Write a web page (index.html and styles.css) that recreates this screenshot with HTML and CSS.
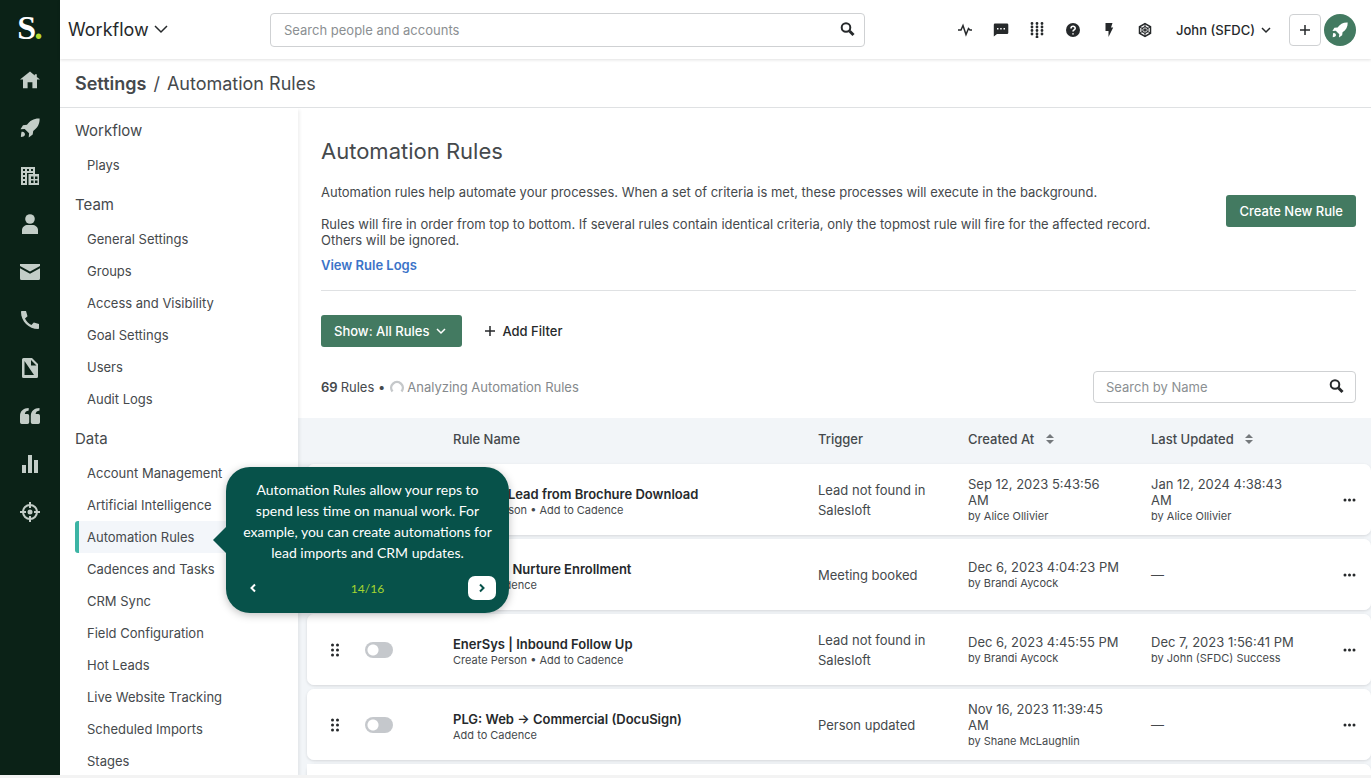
FILE: index.html
```
<!DOCTYPE html>
<html lang="en">
<head>
    <meta charset="UTF-8">
    <meta name="viewport" content="width=device-width, initial-scale=1.0">
    <title>Automation Rules</title>
    <link rel="stylesheet" href="styles.css">
</head>
<body>
    <div class="app">
        <!-- Icon rail -->
        <nav class="rail" aria-label="Main">
            <a href="#" class="logo">S<span>.</span></a>
            <a href="#" aria-label="Home"><svg viewBox="0 0 20 20"><path d="M10 1.5 0 9.6h3v8.6h4.6v-6h4.8v6H17V9.6h3L16.8 7V4.2h-2V5.4z"/></svg></a>
            <a href="#" aria-label="Cadences"><svg viewBox="0 0 20 20"><path d="M19.6.5C14.2.2 9.8 2.6 7 6.8L3 7.2.5 11.2l4.2-.3 4.4 4.4-.4 4.2 4-3 .5-3.6c4.200-2.700 6.700-7 6.400-12.400z"/><path d="M1.6 13.800c1.800-.6 3.900 1.200 3.300 3.200-.4 1.300-2 1.800-4 2 .1-2 .2-3.400.7-5.200z"/></svg></a>
            <a href="#" aria-label="Accounts"><svg viewBox="0 0 20 20"><path fill-rule="evenodd" d="M1 1h14v7h4v11H9v0H1zM3 3v2h2V3zm4 0v2h2V3zm4 0v2h2V3zM3 7v2h2V7zm0 4v2h2v-2zm0 4v2h2v-2zM7 7v12h1.5V8H13V7zm4 3.500v2.500h2.500v-2.500zm4 0v2.500h2.500v-2.500zM11 14.500v2.500h2.500v-2.500zm4 0v2.500h2.500v-2.500z"/></svg></a>
            <a href="#" aria-label="People"><svg viewBox="0 0 20 20"><circle cx="10" cy="5" r="4.8"/><path d="M2 20v-4c0-3 3-5 5.500-5h5c2.500 0 5.500 2 5.500 5v4z"/></svg></a>
            <a href="#" aria-label="Emails"><svg viewBox="0 0 20 20"><path d="M0 2h20v2l-10 5.500L0 4z"/><path d="M0 6.200l10 5.500 10-5.500V16.500a1.500 1.500 0 0 1-1.500 1.500h-17A1.500 1.500 0 0 1 0 16.500z"/></svg></a>
            <a href="#" aria-label="Calls"><svg viewBox="0 0 20 20"><path d="M2 1h4l1.500 5.200L5 8.600c1.400 3 3.400 5 6.400 6.400l2.400-2.500L19 14v4.200c0 .5-.4.800-.8.800C8.700 19 1 11.300 1 2c0-.6.400-1 1-1z"/></svg></a>
            <a href="#" aria-label="Templates"><svg viewBox="0 0 20 20"><path fill-rule="evenodd" d="M3.500 0H12l6 6v12.500a1.500 1.500 0 0 1-1.500 1.500h-13A1.500 1.500 0 0 1 2 18.500v-17A1.500 1.500 0 0 1 3.500 0zM4.500 3v14H14zM11 2v5.500h5.500z"/></svg></a>
            <a href="#" aria-label="Snippets"><svg viewBox="0 0 20 20"><path d="M8.700 2v2.500C6.500 4.800 5 6 4.800 8H7.500A1.700 1.700 0 0 1 9.200 9.700v6.600A1.700 1.700 0 0 1 7.500 18H1.700A1.700 1.700 0 0 1 0 16.300V10C0 5 3.500 2 8.700 2zM19.500 2v2.500C17.300 4.800 15.800 6 15.600 8h2.700A1.700 1.700 0 0 1 20 9.700v6.600a1.700 1.700 0 0 1-1.700 1.700h-5.800a1.700 1.700 0 0 1-1.700-1.700V10c0-5 3.500-8 8.700-8z"/></svg></a>
            <a href="#" aria-label="Analytics"><svg viewBox="0 0 20 20"><path d="M2 11h4v8H2zM8 1h4v18H8zM14 6h4v13h-4z"/></svg></a>
            <a href="#" aria-label="Opportunities"><svg viewBox="0 0 20 20"><circle cx="10" cy="10" r="7" fill="none" stroke="currentColor" stroke-width="2"/><circle cx="10" cy="10" r="2.5"/><path d="M9 0h2v6H9zM9 14h2v6H9zM0 9h6v2H0zM14 9h6v2h-6z"/></svg></a>
        </nav>

        <div class="page">
            <header class="topbar">
                <button type="button" class="product">Workflow
                    <svg class="line thin" width="14" height="14" viewBox="0 0 14 14"><path d="M1 3l6 6 6-6"/></svg>
                </button>
                <form class="search search-global">
                    <input type="search" aria-label="Search people and accounts" placeholder="Search people and accounts">
                    <svg class="line" width="16" height="16" viewBox="0 0 16 16"><circle cx="6" cy="5.5" r="4.3"/><path class="handle" d="M9.5 9l4 4"/></svg>
                </form>
                <div class="tools">
                    <button type="button" aria-label="Activity"><svg class="line thin" viewBox="0 0 16 16"><path d="M1 8h3l2-4.500 3 9 2.500-6L13 8h2"/></svg></button>
                    <button type="button" aria-label="Messages"><svg viewBox="0 0 16 16"><path fill-rule="evenodd" d="M2 1.500h12a1.300 1.300 0 0 1 1.300 1.300v8A1.300 1.300 0 0 1 14 12.100H4L.8 14.500V2.800A1.300 1.300 0 0 1 2 1.500zM4 6v1.500h1.500V6zm3.200 0v1.500h1.500V6zm3.300 0v1.500H12V6z"/></svg></button>
                    <button type="button" aria-label="Dialer"><svg class="dots" viewBox="0 0 16 16"><path d="M3 1.500h0M8 1.500h0M13 1.500h0M3 5h0M8 5h0M13 5h0M3 8.500h0M8 8.500h0M13 8.500h0M3 12h0M8 12h0M13 12h0M8 15h0"/></svg></button>
                    <button type="button" aria-label="Help"><svg viewBox="0 0 16 16"><circle cx="8" cy="8" r="7"/><path class="cut" d="M6 6.500C6 3.500 10.300 3.700 10.200 6.300 10.200 7.900 8 7.800 8 9.500M8 11.200v1.200"/></svg></button>
                    <button type="button" aria-label="Shortcuts"><svg viewBox="0 0 16 16"><path d="M4.500 1H11.500L10 5.500H12.200L7.500 15V9H4.500z"/></svg></button>
                    <button type="button" aria-label="Integrations"><svg class="line thin" viewBox="0 0 16 16"><path d="M8 1.600l5.500 3.200v6.400L8 14.400l-5.500-3.200V4.800z"/><path class="spokes" d="M8 1.600v12.800M2.500 4.800l11 6.400M13.500 4.800l-11 6.400M8 4.500l3 1.700v3.600L8 11.500 5 9.800V6.200z"/></svg></button>
                    <button type="button" class="account">John (SFDC)
                        <svg class="line thin" width="10" height="10" viewBox="0 0 10 10"><path d="M1 3l4 4 4-4"/></svg>
                    </button>
                    <button type="button" class="add" aria-label="Add"><svg class="line thin" width="12" height="12" viewBox="0 0 12 12"><path d="M6 1v10M1 6h10"/></svg></button>
                    <button type="button" class="launch" aria-label="Launch"><svg viewBox="0 0 20 20"><path d="M19.6.5C14.2.2 9.8 2.6 7 6.8L3 7.2.5 11.2l4.2-.3 4.4 4.4-.4 4.2 4-3 .5-3.6c4.200-2.700 6.700-7 6.400-12.400z"/><path d="M1.6 13.800c1.800-.6 3.900 1.200 3.300 3.200-.4 1.300-2 1.800-4 2 .1-2 .2-3.400.7-5.200z"/></svg></button>
                </div>
            </header>

            <div class="breadcrumb"><a href="#">Settings</a><span>/</span><span>Automation Rules</span></div>

            <div class="body">
                <!-- Settings menu -->
                <nav class="settings" aria-label="Settings">
                    <section>
                        <h2>Workflow</h2>
                        <ul>
                            <li><a href="#">Plays</a></li>
                        </ul>
                    </section>
                    <section>
                        <h2>Team</h2>
                        <ul>
                            <li><a href="#">General Settings</a></li>
                            <li><a href="#">Groups</a></li>
                            <li><a href="#">Access and Visibility</a></li>
                            <li><a href="#">Goal Settings</a></li>
                            <li><a href="#">Users</a></li>
                            <li><a href="#">Audit Logs</a></li>
                        </ul>
                    </section>
                    <section>
                        <h2>Data</h2>
                        <ul>
                            <li><a href="#">Account Management</a></li>
                            <li><a href="#">Artificial Intelligence</a></li>
                            <li class="active">
                                <a href="#" aria-current="page">Automation Rules</a>
                                <!-- Tour step -->
                                <div class="tour" role="dialog" aria-label="Product tour">
                                    <p>Automation Rules allow your reps to spend less time on manual work. For example, you can create automations for lead imports and CRM updates.</p>
                                    <div class="tour-nav">
                                        <button type="button" aria-label="Previous"><svg class="line" width="8" height="10" viewBox="0 0 8 10"><path d="M6 1.500L2.500 5 6 8.500"/></svg></button>
                                        <span>14/16</span>
                                        <button type="button" class="next" aria-label="Next"><svg class="line" width="8" height="10" viewBox="0 0 8 10"><path d="M2 1.500L5.500 5 2 8.500"/></svg></button>
                                    </div>
                                </div>
                            </li>
                            <li><a href="#">Cadences and Tasks</a></li>
                            <li><a href="#">CRM Sync</a></li>
                            <li><a href="#">Field Configuration</a></li>
                            <li><a href="#">Hot Leads</a></li>
                            <li><a href="#">Live Website Tracking</a></li>
                            <li><a href="#">Scheduled Imports</a></li>
                            <li><a href="#">Stages</a></li>
                        </ul>
                    </section>
                </nav>

                <main class="content">
                    <div class="intro">
                        <div class="intro-text">
                            <h1>Automation Rules</h1>
                            <p>Automation rules help automate your processes. When a set of criteria is met, these processes will execute in the background.</p>
                            <p>Rules will fire in order from top to bottom. If several rules contain identical criteria, only the topmost rule will fire for the affected record. Others will be ignored.</p>
                            <a href="#">View Rule Logs</a>
                        </div>
                        <button type="button" class="primary">Create New Rule</button>
                    </div>

                    <div class="filters">
                        <button type="button" class="primary">Show: All Rules
                            <svg class="line thin" width="10" height="10" viewBox="0 0 10 10"><path d="M1 3l4 4 4-4"/></svg>
                        </button>
                        <button type="button" class="add-filter">
                            <svg class="line thin" width="12" height="12" viewBox="0 0 12 12"><path d="M6 1v10M1 6h10"/></svg>
                            Add Filter
                        </button>
                    </div>

                    <div class="summary">
                        <div class="count"><b>69</b> Rules •
                            <svg class="spinner" width="14" height="14" viewBox="0 0 14 14"><path d="M2.5 11.500A5.800 5.800 0 1 1 11.500 11.500"/></svg>
                            <span>Analyzing Automation Rules</span>
                        </div>
                        <form class="search search-name">
                            <input type="search" aria-label="Search by Name" placeholder="Search by Name">
                            <svg class="line" width="16" height="16" viewBox="0 0 16 16"><circle cx="6" cy="5.5" r="4.3"/><path class="handle" d="M9.5 9l4 4"/></svg>
                        </form>
                    </div>

                    <div class="rules">
                        <table>
                            <thead>
                                <tr>
                                    <th class="col-drag"></th>
                                    <th class="col-toggle"></th>
                                    <th>Rule Name</th>
                                    <th class="col-trigger">Trigger</th>
                                    <th class="col-date">Created At <svg class="sort" width="8" height="12" viewBox="0 0 8 12"><path d="M0 5l4-4 4 4zM0 7h8l-4 4z"/></svg></th>
                                    <th class="col-date">Last Updated <svg class="sort" width="8" height="12" viewBox="0 0 8 12"><path d="M0 5l4-4 4 4zM0 7h8l-4 4z"/></svg></th>
                                    <th class="col-menu"></th>
                                </tr>
                            </thead>
                            <tbody>
                                <tr>
                                    <td class="drag"><svg class="dots" width="10" height="14" viewBox="0 0 10 14"><path d="M2.500 2h0M7.500 2h0M2.500 7h0M7.500 7h0M2.500 12h0M7.500 12h0"/></svg></td>
                                    <td><input type="checkbox" class="toggle" aria-label="Enable Inbound Lead from Brochure Download"></td>
                                    <td class="name"><strong>Inbound Lead from Brochure Download</strong><small>Create Person • Add to Cadence</small></td>
                                    <td class="trigger">Lead not found in Salesloft</td>
                                    <td class="date">Sep 12, 2023 5:43:56 AM<small>by Alice Ollivier</small></td>
                                    <td class="date">Jan 12, 2024 4:38:43 AM<small>by Alice Ollivier</small></td>
                                    <td class="menu"><button type="button" aria-label="More actions"><svg class="dots" width="14" height="6" viewBox="0 0 14 6"><path d="M3 3h0M7.500 3h0M12 3h0"/></svg></button></td>
                                </tr>
                                <tr>
                                    <td class="drag"><svg class="dots" width="10" height="14" viewBox="0 0 10 14"><path d="M2.500 2h0M7.500 2h0M2.500 7h0M7.500 7h0M2.500 12h0M7.500 12h0"/></svg></td>
                                    <td><input type="checkbox" class="toggle" aria-label="Enable Hot Lead Nurture Enrollment"></td>
                                    <td class="name"><strong>Hot Lead Nurture Enrollment</strong><small>Add to Cadence</small></td>
                                    <td class="trigger">Meeting booked</td>
                                    <td class="date">Dec 6, 2023 4:04:23 PM<small>by Brandi Aycock</small></td>
                                    <td class="date">—</td>
                                    <td class="menu"><button type="button" aria-label="More actions"><svg class="dots" width="14" height="6" viewBox="0 0 14 6"><path d="M3 3h0M7.500 3h0M12 3h0"/></svg></button></td>
                                </tr>
                                <tr>
                                    <td class="drag"><svg class="dots" width="10" height="14" viewBox="0 0 10 14"><path d="M2.500 2h0M7.500 2h0M2.500 7h0M7.500 7h0M2.500 12h0M7.500 12h0"/></svg></td>
                                    <td><input type="checkbox" class="toggle" aria-label="Enable EnerSys | Inbound Follow Up"></td>
                                    <td class="name"><strong>EnerSys | Inbound Follow Up</strong><small>Create Person • Add to Cadence</small></td>
                                    <td class="trigger">Lead not found in Salesloft</td>
                                    <td class="date">Dec 6, 2023 4:45:55 PM<small>by Brandi Aycock</small></td>
                                    <td class="date">Dec 7, 2023 1:56:41 PM<small>by John (SFDC) Success</small></td>
                                    <td class="menu"><button type="button" aria-label="More actions"><svg class="dots" width="14" height="6" viewBox="0 0 14 6"><path d="M3 3h0M7.500 3h0M12 3h0"/></svg></button></td>
                                </tr>
                                <tr>
                                    <td class="drag"><svg class="dots" width="10" height="14" viewBox="0 0 10 14"><path d="M2.500 2h0M7.500 2h0M2.500 7h0M7.500 7h0M2.500 12h0M7.500 12h0"/></svg></td>
                                    <td><input type="checkbox" class="toggle" aria-label="Enable PLG: Web → Commercial (DocuSign)"></td>
                                    <td class="name"><strong>PLG: Web → Commercial (DocuSign)</strong><small>Add to Cadence</small></td>
                                    <td class="trigger">Person updated</td>
                                    <td class="date">Nov 16, 2023 11:39:45 AM<small>by Shane McLaughlin</small></td>
                                    <td class="date">—</td>
                                    <td class="menu"><button type="button" aria-label="More actions"><svg class="dots" width="14" height="6" viewBox="0 0 14 6"><path d="M3 3h0M7.500 3h0M12 3h0"/></svg></button></td>
                                </tr>
                                <tr>
                                    <td colspan="7"></td>
                                </tr>
                            </tbody>
                        </table>
                    </div>
                </main>
            </div>
        </div>
    </div>
</body>
</html>
```
FILE: styles.css
```
* {
    box-sizing: border-box;
}
body {
    margin: 0;
    padding-bottom: 3px;
    height: 100vh;
    overflow: hidden;
    background-color: #f3f3f3;
    color: #45494c;
    font-family: Inter, "Liberation Sans", sans-serif;
    font-size: 13px;
    line-height: 16px;
}
h1, h2, p, ul {
    margin: 0;
    padding: 0;
    font-weight: 400;
}
ul {
    list-style: none;
}
a {
    color: inherit;
    text-decoration: none;
}
button {
    border: 0;
    padding: 0;
    background: none;
    color: #26292b;
    font: inherit;
    cursor: pointer;
}
svg {
    display: block;
    flex: none;
    fill: currentColor;
}
.line {
    fill: none;
    stroke: currentColor;
    stroke-width: 2;
}
.line.thin {
    stroke-width: 1.5;
}
.dots {
    stroke: currentColor;
    stroke-width: 3;
    stroke-linecap: round;
}
.app {
    display: flex;
    height: 100%;
    overflow: hidden;
    background-color: #fff;
}

/* Icon rail */
.rail {
    flex: none;
    width: 60px;
    background-color: #0b2217;
    color: #c3cdc7;
}
.rail a {
    display: flex;
    align-items: center;
    justify-content: center;
    height: 48px;
}
.rail svg {
    width: 20px;
    height: 20px;
}
.rail .logo {
    height: 56px;
    color: #fff;
    font-family: "Liberation Serif", serif;
    font-size: 34px;
    font-weight: 700;
}
.logo span {
    margin-left: -2px;
    color: #b4d92f;
}

/* Top bar */
.page {
    display: flex;
    flex-direction: column;
    flex: 1;
    min-width: 0;
}
.topbar {
    display: flex;
    align-items: center;
    flex: none;
    height: 59px;
    padding: 0 15px 0 8px;
    box-shadow: 0 1px 3px rgba(0, 0, 0, 0.12);
}
.product {
    display: flex;
    align-items: center;
    gap: 5px;
    width: 202px;
    font-size: 18px;
}
.search {
    display: flex;
    align-items: center;
    border: 1px solid #cfd1d3;
    border-radius: 4px;
    color: #26292b;
}
.search input {
    flex: 1;
    min-width: 0;
    border: 0;
    padding: 0;
    outline: 0;
    background: none;
    font: inherit;
}
.search input::placeholder {
    color: #8b8f92;
}
.search .handle {
    stroke-width: 3;
}
.search-global {
    flex: 0 1 595px;
    height: 34px;
    padding: 0 8px 0 13px;
}
.tools {
    display: flex;
    align-items: center;
    gap: 20px;
    margin-left: auto;
}
.tools svg {
    width: 16px;
    height: 16px;
}
.tools .cut {
    fill: none;
    stroke: #fff;
    stroke-width: 1.6;
}
.tools .spokes {
    stroke-width: 1;
}
.tools .dots {
    stroke-width: 2.8;
}
.tools .account {
    display: flex;
    align-items: center;
    gap: 6px;
    margin-left: 3px;
    font-weight: 500;
}
.tools .account svg {
    width: 10px;
    height: 10px;
}
.tools .add, .tools .launch {
    display: flex;
    align-items: center;
    justify-content: center;
    width: 32px;
    height: 32px;
}
.tools .add {
    margin-left: -2px;
    border: 1px solid #cfd1d3;
    border-radius: 4px;
}
.tools .add svg {
    width: 12px;
    height: 12px;
}
.tools .launch {
    margin-left: -17px;
    border-radius: 50%;
    background-color: #437a61;
    color: #fff;
}
.breadcrumb {
    display: flex;
    gap: 7px;
    flex: none;
    height: 49px;
    padding-left: 15px;
    border-bottom: 1px solid #dfe1e3;
    font-size: 18px;
    line-height: 49px;
}
.breadcrumb a {
    font-weight: 600;
}
.body {
    display: flex;
    flex: 1;
    min-height: 0;
}

/* Settings menu */
.settings {
    position: relative;
    z-index: 1;
    flex: none;
    width: 238px;
    padding: 5px 0 0 15px;
    background-color: #fff;
    box-shadow: 2px 2px 3px rgba(0, 0, 0, 0.06);
}
.settings section {
    margin-bottom: 6px;
}
.settings h2 {
    font-size: 15px;
    line-height: 36px;
}
.settings li {
    position: relative;
    padding-left: 12px;
    line-height: 32px;
}
.settings li a {
    display: block;
}
.settings .active {
    padding-left: 8px;
    border-left: 4px solid #3cb4a4;
    border-radius: 3px 0 0 3px;
    background-color: #f3f6fa;
}
.tour {
    position: absolute;
    top: -54px;
    left: 147px;
    width: 283px;
    padding: 12px 13px 13px;
    border-radius: 24px;
    background-color: #07524a;
    box-shadow: 0 2px 8px rgba(0, 0, 0, 0.25);
    color: #fff;
    font-family: Lato, sans-serif;
    font-size: 14px;
    line-height: 21px;
    text-align: center;
}
.tour::before {
    content: "";
    position: absolute;
    top: 60px;
    left: -13px;
    border: 13px solid transparent;
    border-left-width: 0;
    border-right-color: #07524a;
}
.tour-nav {
    display: flex;
    align-items: center;
    justify-content: space-between;
    margin-top: 13px;
    color: #a5d62f;
    font-size: 12px;
}
.tour-nav button {
    display: flex;
    align-items: center;
    justify-content: center;
    width: 28px;
    height: 24px;
    border-radius: 7px;
    color: #fff;
}
.tour-nav .next {
    background-color: #fff;
    color: #07524a;
}

/* Rules page */
.content {
    flex: 1;
    min-width: 0;
    overflow: hidden;
}
.intro {
    display: flex;
    align-items: center;
    justify-content: space-between;
    margin: 0 15px 24px 23px;
    padding: 28px 0 17px;
    border-bottom: 1px solid #dfe1e3;
}
.intro-text {
    width: 840px;
}
.intro .primary {
    margin-top: 12px;
}
h1 {
    margin-bottom: 18px;
    font-size: 22px;
    line-height: 30px;
}
.intro p {
    margin-bottom: 16px;
}
.intro p + p {
    margin-bottom: 9px;
}
.intro a {
    display: inline-block;
    color: #3b73c8;
    font-weight: 600;
}
.primary {
    display: flex;
    align-items: center;
    gap: 7px;
    height: 32px;
    padding: 0 13px;
    border-radius: 3px;
    background-color: #437a61;
    color: #fff;
    font-weight: 500;
    white-space: nowrap;
}
.filters {
    display: flex;
    gap: 22px;
    padding-left: 23px;
}
.filters .primary {
    padding-right: 16px;
}
.add-filter {
    display: flex;
    align-items: center;
    gap: 6px;
    font-weight: 500;
}
.summary {
    display: flex;
    align-items: center;
    justify-content: space-between;
    padding: 24px 15px 15px 23px;
}
.count {
    display: flex;
    align-items: center;
    gap: 3px;
}
.count span {
    color: #85898c;
}
.count b {
    font-weight: 600;
}
.spinner {
    margin-left: 2px;
    fill: none;
    stroke: #c5c8ca;
    stroke-width: 2.4;
}
.search-name {
    width: 263px;
    height: 32px;
    padding: 0 10px 0 12px;
}
.rules {
    padding-left: 9px;
    background-color: #f2f5f8;
}
table {
    width: 100%;
    border-spacing: 0 4px;
    table-layout: fixed;
}
th {
    height: 38px;
    padding: 0 0 4px 12px;
    font-weight: 500;
    text-align: left;
}
.col-drag {
    width: 46px;
}
.col-toggle {
    width: 88px;
}
.col-trigger {
    width: 150px;
}
.col-date {
    width: 183px;
}
.col-menu {
    width: 49px;
}
.sort {
    display: inline;
    margin-left: 8px;
    vertical-align: -1px;
    color: #75797c;
}
tbody tr {
    border-radius: 7px;
    box-shadow: 0 1px 3px rgba(0, 0, 0, 0.12);
}
td {
    height: 71px;
    padding: 0 12px;
    background-color: #fff;
}
td:first-child {
    border-radius: 7px 0 0 7px;
}
td:last-child {
    border-radius: 0 7px 7px 0;
}
td small {
    display: block;
    font-size: 11px;
    line-height: 16px;
}
.drag {
    padding-left: 23px;
    color: #26292b;
}
.name {
    padding-top: 4px;
}
.name strong {
    display: block;
    color: #26292b;
    font-weight: 600;
}
.trigger {
    line-height: 20px;
}
.date {
    padding-right: 18px;
}
.menu {
    padding: 0 14px 0 20px;
}
.menu button {
    display: block;
}
.toggle {
    display: block;
    appearance: none;
    width: 28px;
    height: 16px;
    margin: 0;
    border-radius: 8px;
    background: radial-gradient(circle at 8px 8px, #fff 5px, #c5c8cc 6px);
}
```
